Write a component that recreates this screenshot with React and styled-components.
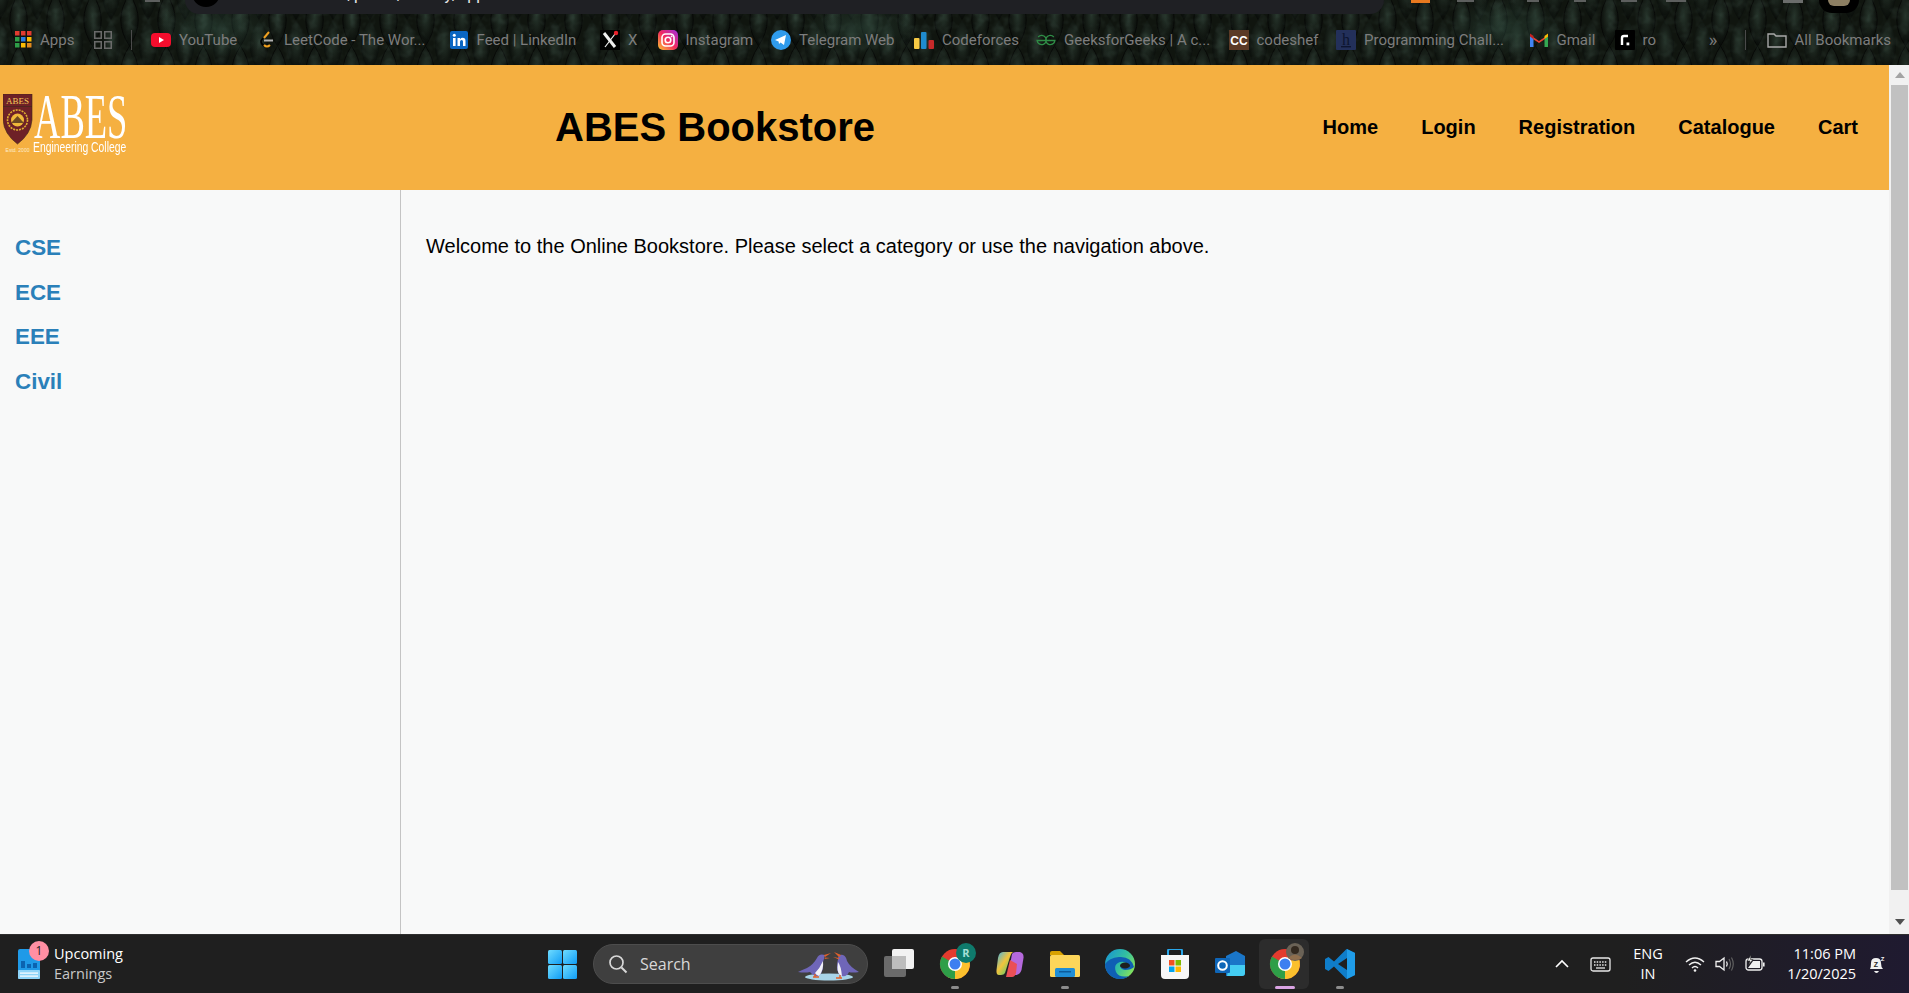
import React from 'react';
import styled, { createGlobalStyle } from 'styled-components';

const GlobalStyle = createGlobalStyle`
    html, body {
        margin: 0;
        padding: 0;
        height: 100%;
        overflow: hidden;
        font-family: "Liberation Sans", Arial, sans-serif;
    }
`;

const Screen = styled.div`
    height: 993px;
    display: flex;
    flex-direction: column;
    background-color: #f8f9f9;
`;

/* ---- browser chrome ---- */
const Chrome = styled.div`
    height: 65px;
    flex: none;
    position: relative;
    overflow: hidden;
    background-color: #10150f;
`;
const ChromeTexture = styled.svg`
    position: absolute;
    inset: 0;
    width: 100%;
    height: 100%;
`;
const TopStrip = styled.div`
    position: relative;
    height: 14px;
    padding-left: 145px;
    display: flex;
    align-items: flex-start;
`;
const AddressBar = styled.div`
    width: 1199px;
    height: 14px;
    flex: none;
    margin-left: 25px;
    background-color: #1f2024;
    border-radius: 0 0 14px 14px;
    overflow: hidden;
    display: flex;
    padding-left: 7px;
    box-sizing: border-box;
`;
const SiteBadge = styled.div`
    width: 28px;
    height: 28px;
    border-radius: 50%;
    background-color: #000;
    margin-top: -21px;
    flex: none;
`;
const UrlText = styled.div`
    color: #e8e8e8;
    font: 16px "Roboto", sans-serif;
    line-height: 16px;
    margin-top: -13px;
    margin-left: 21px;
    white-space: nowrap;
`;
const ToolStub = styled.div`
    width: ${p => p.$width}px;
    height: ${p => p.$height || 2}px;
    margin-left: ${p => p.$gap}px;
    flex: none;
    background-color: ${p => p.$color || '#5d5f5e'};
`;
const Avatar = styled.div`
    width: 40px;
    height: 13px;
    margin-left: 16px;
    flex: none;
    border-radius: 0 0 20px 20px;
    background-color: #000;
    display: flex;
    justify-content: center;
`;
const AvatarPhoto = styled.div`
    width: 22px;
    height: 6px;
    border-radius: 0 0 11px 11px;
    background-color: #8d7f63;
`;
const BookmarkBar = styled.div`
    position: relative;
    height: 51px;
    display: flex;
    align-items: center;
    padding-bottom: 10px;
    box-sizing: border-box;
    padding-top: 10px;
    color: #7d7d7d;
    font: 15px "Roboto", sans-serif;
`;
const Bookmark = styled.div`
    width: ${p => p.$width}px;
    flex: none;
    display: flex;
    align-items: center;
    gap: 8px;
    white-space: nowrap;
`;
const AppsBookmark = styled(Bookmark)`
    padding-left: 15px;
    box-sizing: border-box;
`;
const Separator = styled.div`
    width: 1px;
    height: 20px;
    flex: none;
    background-color: #4a4a4a;
    margin: ${p => p.$margin};
`;
const IconBox = styled.svg`
    width: ${p => p.$size || 20}px;
    height: ${p => p.$height || p.$size || 20}px;
    flex: none;
    overflow: ${p => (p.$spill ? 'visible' : 'hidden')};
`;
const Overflow = styled.div`
    font-size: 19px;
    width: 36px;
    color: #777;
`;

/* ---- page ---- */
const Viewport = styled.div`
    flex: 1;
    min-height: 0;
    display: flex;
`;
const Page = styled.div`
    flex: 1;
    min-width: 0;
    display: flex;
    flex-direction: column;
`;
const Header = styled.header`
    height: 125px;
    flex: none;
    display: flex;
    align-items: center;
    background-color: #f5b041;
    color: #000;
`;
const Logo = styled.div`
    width: 555px;
    flex: none;
    height: 100%;
    display: flex;
    align-items: center;
    padding-left: 3px;
    box-sizing: border-box;
    gap: 2px;
`;
const Shield = styled(IconBox)`
    margin-top: -5px;
`;
const LogoWords = styled.div`
    color: #fff;
    display: flex;
    flex-direction: column;
    width: 96px;
    margin-top: -7px;
`;
const LogoName = styled.div`
    font-family: "Liberation Serif", serif;
    font-size: 63px;
    line-height: 46px;
    margin-left: -1px;
    transform: scaleX(0.58);
    transform-origin: left center;
    white-space: nowrap;
`;
const LogoTag = styled.div`
    font-size: 15px;
    line-height: 14px;
    margin-left: -2px;
    transform: scaleX(0.69);
    transform-origin: left center;
    white-space: nowrap;
`;
const Title = styled.h1`
    margin: 0;
    font-size: 40px;
    font-weight: bold;
    flex: 1;
`;
const Nav = styled.nav`
    display: flex;
    gap: 43px;
    padding-right: 31px;
`;
const NavLink = styled.a`
    font-size: 20px;
    font-weight: bold;
    color: #000;
`;
const Body = styled.div`
    flex: 1;
    display: flex;
    min-height: 0;
`;
const Sidebar = styled.aside`
    width: 401px;
    flex: none;
    box-sizing: border-box;
    border-right: 1px solid #c4c4c4;
    padding: 45px 15px 0;
    display: flex;
    flex-direction: column;
    gap: 18.7px;
`;
const SideLink = styled.a`
    font-size: 22.4px;
    line-height: 26px;
    font-weight: bold;
    color: #2a80b9;
`;
const Main = styled.main`
    flex: 1;
    padding: 43px 25px 0;
    font-size: 20px;
    line-height: 26px;
    color: #000;
`;
const Scrollbar = styled.div`
    width: 20px;
    flex: none;
    background-color: #f1f1f1;
    display: flex;
    flex-direction: column;
    align-items: center;
    padding-left: 1px;
    box-sizing: border-box;
`;
const ArrowUp = styled.div`
    width: 0;
    height: 0;
    margin: 7px 0;
    border-left: 5px solid transparent;
    border-right: 5px solid transparent;
    border-bottom: 6px solid #a3a3a3;
`;
const ArrowDown = styled(ArrowUp)`
    margin: 5px 0 9px;
    border-bottom: none;
    border-top: 6px solid #505050;
`;
const Thumb = styled.div`
    flex: 1;
    width: 17px;
    margin: 0 0 24px;
    background-color: #c1c1c1;
`;

/* ---- windows taskbar ---- */
const Taskbar = styled.footer`
    height: 59px;
    flex: none;
    display: flex;
    align-items: center;
    color: #fff;
    font: 14px "Open Sans", sans-serif;
    background: linear-gradient(90deg, #1f1f1f 0%, #1f1f1f 85%, #1f1a30 100%);
    border-top: 1px solid #2e2e2e;
    box-sizing: border-box;
`;
const Widget = styled.div`
    width: 548px;
    flex: none;
    display: flex;
    align-items: center;
    gap: 12px;
    padding-left: 18px;
    box-sizing: border-box;
    position: relative;
`;
const WidgetBadge = styled.div`
    position: absolute;
    left: 29px;
    top: -3px;
    width: 20px;
    height: 20px;
    border-radius: 50%;
    background-color: #ff8fa3;
    color: #222;
    font-size: 12px;
    line-height: 20px;
    text-align: center;
`;
const WidgetText = styled.div`
    line-height: 20px;
    font-size: 14.5px;
`;
const WidgetSub = styled.div`
    color: #c8c8c8;
`;
const SearchPill = styled.div`
    width: 275px;
    height: 40px;
    margin-left: 16px;
    flex: none;
    box-sizing: border-box;
    background-color: #3f3f3f;
    border: 1px solid #4d4d4d;
    border-radius: 20px;
    display: flex;
    align-items: center;
    padding-left: 14px;
    gap: 12px;
    color: #d8d8d8;
    font-size: 16px;
    position: relative;
`;
const Penguins = styled.svg`
    position: absolute;
    right: 5px;
    top: 7px;
    width: 64px;
    height: 32px;
`;
const TaskView = styled(IconBox)`
    margin-left: 16px;
`;
const Apps = styled.div`
    display: flex;
    align-items: center;
    margin-left: 13px;
`;
const AppTile = styled.div`
    width: 55px;
    height: 50px;
    flex: none;
    position: relative;
    display: flex;
    align-items: center;
    justify-content: center;
    &::before {
        content: '';
        display: ${p => (p.$active ? 'block' : 'none')};
        position: absolute;
        left: 2px;
        top: 0;
        width: 50px;
        height: 50px;
        border-radius: 6px;
        background-color: #2c2c2c;
    }
    & > svg {
        position: relative;
    }
    &::after {
        content: '';
        display: ${p => (p.$dot ? 'block' : 'none')};
        position: absolute;
        bottom: 0;
        left: 50%;
        transform: translateX(-50%);
        width: ${p => (p.$active ? 20 : 8)}px;
        height: 3px;
        border-radius: 2px;
        background-color: ${p => (p.$active ? '#d9a3e3' : '#8c8c8c')};
    }
`;
const Tray = styled.div`
    margin-left: auto;
    display: flex;
    align-items: center;
    padding-right: 24px;
`;
const TrayIcon = styled.div`
    display: flex;
    margin-left: ${p => p.$gap}px;
`;
const Lang = styled.div`
    margin-left: 19px;
    width: 36px;
    text-align: center;
    font-size: 14.5px;
    line-height: 20px;
`;
const Clock = styled.div`
    margin-left: 1px;
    width: 90px;
    text-align: right;
    font-size: 14.5px;
    line-height: 20px;
`;

const appIcons = [
    { dot: true, icon: (
        <IconBox $size={30} $spill viewBox="0 0 30 30">
            <circle cx="15" cy="15" r="15" fill="#e33b2e" />
            <path d="M15 15 L28 7.5 A15 15 0 0 1 7.5 28 Z" fill="#fbc02d" />
            <path d="M15 15 L15 30 A15 15 0 0 1 2 7.5 Z" fill="#2e9e48" />
            <circle cx="15" cy="15" r="7" fill="#fff" />
            <circle cx="15" cy="15" r="5.5" fill="#3d7ff0" />
            <circle cx="26" cy="4" r="10" fill="#0f7a6c" />
            <text x="26" y="8" fontSize="11" fontWeight="bold" fill="#a6e0d6" textAnchor="middle" fontFamily="Open Sans">R</text>
        </IconBox>
    ) },
    { icon: (
        <IconBox $size={30} viewBox="0 0 30 30">
            <defs>
                <linearGradient id="cop" x1="0" y1="0" x2="1" y2="1">
                    <stop offset="0" stopColor="#3fb6e8" />
                    <stop offset="0.45" stopColor="#f2c33c" />
                    <stop offset="0.75" stopColor="#7fc860" />
                    <stop offset="1" stopColor="#3fb6e8" />
                </linearGradient>
            </defs>
            <path d="M17 5 Q18 3 21 3 H25 Q29 4 28.5 9 L26.5 21 Q25 26 20 26 H13 Z" fill="#b569dc" />
            <path d="M8 3 H18 Q16 4 15 8 L10 24 Q9 26 6 26 H4 Q1 26 1.5 21 L3 9 Q4 3 8 3 Z" fill="url(#cop)" />
            <path d="M15 11 L11 28 H17 Q20 28 21 24 L22 15 Z" fill="#ea4f56" />
        </IconBox>
    ) },
    { dot: true, icon: (
        <IconBox $size={30} viewBox="0 0 30 30">
            <path d="M0 4 Q0 2 2 2 H10 L14 6 H0 Z" fill="#d9a200" />
            <rect x="0" y="6" width="30" height="22" rx="1.5" fill="#fdd65a" />
            <rect x="5" y="19" width="20" height="9" rx="1.5" fill="#1f8ed6" />
            <rect x="9" y="22" width="12" height="1.5" fill="#0c5c9c" />
        </IconBox>
    ) },
    { icon: (
        <IconBox $size={30} viewBox="0 0 30 30">
            <defs>
                <linearGradient id="edg" x1="0" y1="0" x2="1" y2="0.6">
                    <stop offset="0" stopColor="#1590d8" />
                    <stop offset="0.6" stopColor="#33c0a0" />
                    <stop offset="1" stopColor="#80e060" />
                </linearGradient>
            </defs>
            <circle cx="15" cy="15" r="15" fill="url(#edg)" />
            <path d="M0 15 A15 15 0 0 0 24 27 Q14 29 11 23 Q8 15 15 13 Q21 12 22 16 H16 Q14 20 20 21 Q26 21 29 18 Q26 7 14 8 Q4 9 0 15 Z" fill="#0f5fb4" />
            <ellipse cx="20" cy="16.5" rx="5" ry="3" fill="#1f1f1f" />
        </IconBox>
    ) },
    { icon: (
        <IconBox $size={30} viewBox="0 0 30 30">
            <path d="M8 6 V2 Q8 0 10 0 H20 Q22 0 22 2 V6" fill="none" stroke="#29a7ea" strokeWidth="2" />
            <path d="M1 6 H29 V26 Q29 30 25 30 H5 Q1 30 1 26 Z" fill="#f7f7f7" />
            <rect x="9" y="11" width="5.5" height="5.5" fill="#f25022" />
            <rect x="15.5" y="11" width="5.5" height="5.5" fill="#7fba00" />
            <rect x="9" y="17.5" width="5.5" height="5.5" fill="#00a4ef" />
            <rect x="15.5" y="17.5" width="5.5" height="5.5" fill="#ffb900" />
        </IconBox>
    ) },
    { icon: (
        <IconBox $size={30} viewBox="0 0 30 30">
            <path d="M11 7 L21 2 L30 7 V24 Q30 27 27 27 H11 Z" fill="#1a76c8" />
            <path d="M14 16 H30 V24 Q30 27 27 27 H12 Z" fill="#44cdf2" />
            <rect x="0" y="9" width="15" height="15" rx="1" fill="#0f66b8" />
            <circle cx="7.5" cy="16.5" r="4.3" fill="none" stroke="#fff" strokeWidth="2" />
        </IconBox>
    ) },
    { dot: true, active: true, icon: (
        <IconBox $size={30} $spill viewBox="0 0 30 30">
            <circle cx="15" cy="15" r="15" fill="#e33b2e" />
            <path d="M15 15 L28 7.5 A15 15 0 0 1 7.5 28 Z" fill="#fbc02d" />
            <path d="M15 15 L15 30 A15 15 0 0 1 2 7.5 Z" fill="#2e9e48" />
            <circle cx="15" cy="15" r="7" fill="#fff" />
            <circle cx="15" cy="15" r="5.5" fill="#3d7ff0" />
            <circle cx="25" cy="3" r="9" fill="#6a6256" />
            <circle cx="25" cy="1" r="4" fill="#33291f" />
            <path d="M18 9 Q25 2 32 9 Q25 13 18 9 Z" fill="#8f6e4d" />
        </IconBox>
    ) },
    { dot: true, icon: (
        <IconBox $size={30} viewBox="0 0 30 30">
            <path fillRule="evenodd" d="M21.5 0 L9 12.5 L3.5 8 L0 10 V20 L3.5 22 L9 17.5 L21.5 30 L30 26 V4 Z M22 9 L13 15 L22 21 Z" fill="#0f7dc9" />
            <path d="M22 0 L30 4 V26 L22 30 Z" fill="#1f9ce8" />
        </IconBox>
    ) },
];

const WIDTHS = [105, 192.5, 151.5, 57.5, 113.5, 143, 122, 192.5, 107.5, 192.5, 86, 94];

const STUBS = [
    { gap: 27, width: 19, height: 3, color: '#e8791f' },
    { gap: 27, width: 17 },
    { gap: 53, width: 12 },
    { gap: 35, width: 12 },
    { gap: 35, width: 16 },
    { gap: 29, width: 20 },
    { gap: 97, width: 20, color: '#6b6d6c', height: 3 },
];

const bookmarks = [
    { label: 'YouTube', icon: (
        <IconBox viewBox="0 0 20 20"><rect y="3" width="20" height="14" rx="4" fill="#f50d2d" /><path d="M8 7 L13 10 L8 13 Z" fill="#fff" /></IconBox>
    ) },
    { label: 'LeetCode - The Wor...', icon: (
        <IconBox viewBox="0 0 20 20">
            <path d="M13 2 L8 8" fill="none" stroke="#f0a020" strokeWidth="2" />
            <path d="M7 8 L5 11 Q5 14 8 16" fill="none" stroke="#000" strokeWidth="1.6" />
            <path d="M8 15 Q11 18 14 15" fill="none" stroke="#f0a020" strokeWidth="2" />
            <path d="M8 10.5 H17" stroke="#b0b0b0" strokeWidth="2" />
        </IconBox>
    ) },
    { label: 'Feed | LinkedIn', icon: (
        <IconBox viewBox="0 0 20 20">
            <rect x="1" y="1" width="18" height="18" rx="2" fill="#0a66c2" />
            <rect x="4" y="8" width="2.6" height="8" fill="#fff" />
            <circle cx="5.3" cy="5.3" r="1.5" fill="#fff" />
            <path d="M8.5 8 H11 V9.2 Q12 7.8 13.6 7.8 Q16.5 7.8 16.5 11 V16 H14 V11.5 Q14 10 12.7 10 Q11 10 11 11.8 V16 H8.5 Z" fill="#fff" />
        </IconBox>
    ) },
    { label: 'X', icon: (
        <IconBox viewBox="0 0 20 20">
            <rect width="20" height="20" fill="#000" />
            <path d="M4 3 L15 17" stroke="#eee" strokeWidth="3" />
            <path d="M15 4 L5 17" stroke="#eee" strokeWidth="1.2" />
            <circle cx="16" cy="3" r="2.2" fill="#e8202a" />
        </IconBox>
    ) },
    { label: 'Instagram', icon: (
        <IconBox viewBox="0 0 20 20">
            <defs>
                <linearGradient id="ig" x1="0" y1="1" x2="1" y2="0">
                    <stop offset="0" stopColor="#fdc830" />
                    <stop offset="0.5" stopColor="#f2295f" />
                    <stop offset="1" stopColor="#a02ee0" />
                </linearGradient>
            </defs>
            <rect width="20" height="20" rx="5" fill="url(#ig)" />
            <rect x="4" y="4" width="12" height="12" rx="3.5" fill="none" stroke="#fff" strokeWidth="1.6" />
            <circle cx="10" cy="10" r="2.8" fill="none" stroke="#fff" strokeWidth="1.6" />
            <circle cx="13.6" cy="6.4" r="0.9" fill="#fff" />
        </IconBox>
    ) },
    { label: 'Telegram Web', icon: (
        <IconBox viewBox="0 0 20 20"><circle cx="10" cy="10" r="10" fill="#2f9bec" /><path d="M4 10 L15 5 L13 15 L9.5 12.5 L8 14 L7.6 11.5 Z" fill="#fff" /></IconBox>
    ) },
    { label: 'Codeforces', icon: (
        <IconBox viewBox="0 0 20 20">
            <rect x="0" y="8" width="5.5" height="11" rx="1" fill="#f6c944" />
            <rect x="7" y="2" width="5.5" height="17" rx="1" fill="#1f8bcf" />
            <rect x="14.5" y="10" width="5.5" height="9" rx="1" fill="#c62a2a" />
        </IconBox>
    ) },
    { label: 'GeeksforGeeks | A c...', icon: (
        <IconBox viewBox="0 0 20 20">
            <path d="M17.8 7 A4.6 4.6 0 1 0 18.9 10.5 H1.1 A4.6 4.6 0 1 0 2.2 7" fill="none" stroke="#2f8d46" strokeWidth="1.4" />
        </IconBox>
    ) },
    { label: 'codeshef', icon: (
        <IconBox viewBox="0 0 20 20">
            <rect width="20" height="20" fill="#5b3a26" />
            <text x="10" y="14.5" fontSize="12" fontWeight="bold" fill="#fff" textAnchor="middle" fontFamily="Liberation Sans">CC</text>
        </IconBox>
    ) },
    { label: 'Programming Chall...', icon: (
        <IconBox viewBox="0 0 20 20">
            <rect width="20" height="20" rx="1" fill="#23305a" />
            <text x="10" y="15" fontSize="16" fill="#0d1530" textAnchor="middle" fontFamily="Liberation Serif">h</text>
            <rect x="5" y="16" width="10" height="1.4" fill="#0d1530" />
        </IconBox>
    ) },
    { label: 'Gmail', icon: (
        <IconBox viewBox="0 0 20 20">
            <path d="M1 5 L10 11 L19 5 V7 L10 13 L1 7 Z" fill="#ea4335" />
            <path d="M1 6 V17 H4.5 V9 Z" fill="#4285f4" />
            <path d="M19 6 V17 H15.5 V9 Z" fill="#34a853" />
            <path d="M1 3.5 L4.5 6 V9 L1 6.5 Z" fill="#c5221f" />
            <path d="M19 3.5 L15.5 6 V9 L19 6.5 Z" fill="#fbbc04" />
        </IconBox>
    ) },
    { label: 'ro', icon: (
        <IconBox viewBox="0 0 20 20">
            <rect width="20" height="20" rx="1" fill="#000" />
            <path d="M7 15 V8 Q7 6 9 6 H13" fill="none" stroke="#fff" strokeWidth="2.4" />
            <rect x="11.5" y="12.5" width="2.8" height="2.8" fill="#fff" />
        </IconBox>
    ) },
];

const App = () => {
    return (
        <Screen>
            <GlobalStyle />
            <Chrome>
                <ChromeTexture aria-hidden="true">
                    <defs>
                        <radialGradient id="scale" cx="50%" cy="42%" r="58%">
                            <stop offset="0" stopColor="#26342b" />
                            <stop offset="0.55" stopColor="#151c16" />
                            <stop offset="1" stopColor="#070a07" />
                        </radialGradient>
                        <pattern id="diamonds" width="37" height="52" patternUnits="userSpaceOnUse" patternTransform="translate(0 -6)">
                            <path d="M0 -26 Q18 0 0 26 Q-18 0 0 -26 Z" fill="url(#scale)" />
                            <path d="M37 -26 Q55 0 37 26 Q19 0 37 -26 Z" fill="url(#scale)" />
                            <path d="M0 26 Q18 52 0 78 Q-18 52 0 26 Z" fill="url(#scale)" />
                            <path d="M37 26 Q55 52 37 78 Q19 52 37 26 Z" fill="url(#scale)" />
                            <path d="M18.5 0 Q36 26 18.5 52 Q1 26 18.5 0 Z" fill="url(#scale)" stroke="#060806" strokeWidth="1" />
                        </pattern>
                        <filter id="grain">
                            <feTurbulence type="fractalNoise" baseFrequency="0.12" numOctaves="2" seed="4" />
                            <feColorMatrix values="0 0 0 0 0.2  0 0 0 0 0.34  0 0 0 0 0.28  0 0 0 1.4 -0.62" />
                        </filter>
                        <radialGradient id="glow" cx="50%" cy="50%" r="50%">
                            <stop offset="0" stopColor="#3a5c4d" stopOpacity="0.4" />
                            <stop offset="1" stopColor="#3a5c4d" stopOpacity="0" />
                        </radialGradient>
                    </defs>
                    <rect width="100%" height="100%" fill="url(#diamonds)" />
                    <rect width="100%" height="100%" filter="url(#grain)" opacity="0.2" />
                    <ellipse cx="215" cy="28" rx="60" ry="30" fill="url(#glow)" />
                    <ellipse cx="860" cy="28" rx="60" ry="30" fill="url(#glow)" />
                    <ellipse cx="1505" cy="28" rx="60" ry="30" fill="url(#glow)" />
                </ChromeTexture>
                <TopStrip>
                    <ToolStub $gap={0} $width={15} />
                    <AddressBar>
                        <SiteBadge />
                        <UrlText>127.0.0.1:5500/public/Library/app</UrlText>
                    </AddressBar>
                    {STUBS.map((s, i) => (
                        <ToolStub key={i} $gap={s.gap} $width={s.width} $height={s.height} $color={s.color} />
                    ))}
                    <Avatar><AvatarPhoto /></Avatar>
                </TopStrip>
                <BookmarkBar>
                    <AppsBookmark $width={94}>
                        <IconBox $size={17} viewBox="0 0 17 17">
                            {[0, 6, 12].map(y => [0, 6, 12].map(x => (
                                <rect key={`${x}-${y}`} x={x} y={y} width="4.5" height="4.5" fill={y === 0 ? '#e23b30' : y === 6 ? (x === 6 ? '#2a7de1' : x === 0 ? '#2e9e48' : '#fbbc04') : (x === 0 ? '#2e9e48' : x === 6 ? '#fbbc04' : '#e08a1e')} />
                            )))}
                        </IconBox>
                        Apps
                    </AppsBookmark>
                    <IconBox $size={18} viewBox="0 0 18 18">
                        {[0, 10].map(y => [0, 10].map(x => (
                            <rect key={`${x}-${y}`} x={x + 0.75} y={y + 0.75} width="6.5" height="6.5" fill="none" stroke="#6a6a6a" strokeWidth="1.5" />
                        )))}
                    </IconBox>
                    <Separator $margin="0 19px 0 19px" />
                    {bookmarks.map((b, i) => (
                        <Bookmark key={b.label} $width={WIDTHS[i]}>
                            {b.icon}
                            {b.label}
                        </Bookmark>
                    ))}
                    <Overflow>»</Overflow>
                    <Separator $margin="0 21px 0 0" />
                    <Bookmark $width={130}>
                        <IconBox viewBox="0 0 20 20">
                            <path d="M1 4 H7 L9 6 H19 V17 H1 Z" fill="none" stroke="#a8a8a8" strokeWidth="1.4" />
                        </IconBox>
                        All Bookmarks
                    </Bookmark>
                </BookmarkBar>
            </Chrome>

            <Viewport>
                <Page>
                    <Header>
                        <Logo>
                            <Shield $size={30} $height={62} viewBox="0 0 30 62">
                                <path d="M0 0 H29 V26 Q28 40 14.5 50 Q1 40 0 26 Z" fill="#6e2127" stroke="#3c2a1a" strokeWidth="0.6" />
                                <text x="14.5" y="10" fontSize="9" fill="#f5c95a" textAnchor="middle" fontFamily="Liberation Serif">ABES</text>
                                <path d="M0 12.5 H29" stroke="#3c2a1a" strokeWidth="0.6" />
                                <circle cx="14.5" cy="26" r="10" fill="none" stroke="#e0b030" strokeWidth="1.6" strokeDasharray="2 1" />
                                <circle cx="14.5" cy="26" r="6.5" fill="#f0b93a" />
                                <path d="M8 29 L14.5 22 L21 29 Z" fill="#6e4a22" />
                                <text x="14.5" y="58" fontSize="5" fill="#fdeccb" textAnchor="middle" fontFamily="Liberation Sans">Estd. 2000</text>
                            </Shield>
                            <LogoWords>
                                <LogoName>ABES</LogoName>
                                <LogoTag>Engineering College</LogoTag>
                            </LogoWords>
                        </Logo>
                        <Title>ABES Bookstore</Title>
                        <Nav>
                            <NavLink>Home</NavLink>
                            <NavLink>Login</NavLink>
                            <NavLink>Registration</NavLink>
                            <NavLink>Catalogue</NavLink>
                            <NavLink>Cart</NavLink>
                        </Nav>
                    </Header>
                    <Body>
                        <Sidebar>
                            <SideLink>CSE</SideLink>
                            <SideLink>ECE</SideLink>
                            <SideLink>EEE</SideLink>
                            <SideLink>Civil</SideLink>
                        </Sidebar>
                        <Main>Welcome to the Online Bookstore. Please select a category or use the navigation above.</Main>
                    </Body>
                </Page>
                <Scrollbar>
                    <ArrowUp />
                    <Thumb />
                    <ArrowDown />
                </Scrollbar>
            </Viewport>

            <Taskbar>
                <Widget>
                    <IconBox $size={24} $height={30} viewBox="0 0 24 30">
                        <rect width="22" height="30" rx="2" fill="#1f9ae8" />
                        <rect y="21" width="22" height="9" rx="1" fill="#8fd4f8" />
                        <rect x="3" y="12" width="4" height="7" fill="#0b63b0" />
                        <rect x="9" y="15" width="4" height="4" fill="#0b63b0" />
                        <rect x="15" y="14" width="4" height="5" fill="#0b63b0" />
                        <rect x="2" y="23.5" width="18" height="1.2" fill="#fff" />
                        <rect x="2" y="26.5" width="18" height="1.2" fill="#fff" />
                    </IconBox>
                    <WidgetBadge>1</WidgetBadge>
                    <WidgetText>
                        Upcoming
                        <WidgetSub>Earnings</WidgetSub>
                    </WidgetText>
                </Widget>
                <IconBox $size={29} viewBox="0 0 29 29">
                    <defs>
                        <linearGradient id="win" x1="0" y1="0" x2="1" y2="1">
                            <stop offset="0" stopColor="#6fdcff" />
                            <stop offset="1" stopColor="#0f9cf5" />
                        </linearGradient>
                    </defs>
                    <rect x="0" y="0" width="14" height="14" rx="1.5" fill="url(#win)" />
                    <rect x="15" y="0" width="14" height="14" rx="1.5" fill="url(#win)" />
                    <rect x="0" y="15" width="14" height="14" rx="1.5" fill="url(#win)" />
                    <rect x="15" y="15" width="14" height="14" rx="1.5" fill="url(#win)" />
                </IconBox>
                <SearchPill>
                    <IconBox $size={20} viewBox="0 0 20 20">
                        <circle cx="8.5" cy="8.5" r="6.5" fill="none" stroke="#d8d8d8" strokeWidth="1.7" />
                        <path d="M13.5 13.5 L18.5 18.5" stroke="#d8d8d8" strokeWidth="1.9" />
                    </IconBox>
                    Search
                    <Penguins viewBox="0 0 64 32">
                        <ellipse cx="31" cy="25" rx="24" ry="3.5" fill="#a8d4e8" />
                        <path d="M27 3 Q21 1 19 6 Q15 13 9 16 Q4 18 0 20 Q7 21 12 20 Q16 25 21 24 Q26 19 25 10 Q26 7 27 3 Z" fill="#6f66b8" />
                        <path d="M25 9 Q26 18 21 24 Q18 23 17 21 Q22 16 25 9 Z" fill="#f2f2f8" />
                        <path d="M26 3 L33 1 L27 5 Z M27 5.5 L32 6 L26.5 7 Z" fill="#e0602a" />
                        <path d="M15 25 H21 M17 22 V25" stroke="#e0602a" strokeWidth="1.4" />
                        <path d="M40 7 Q40 2 45 3 Q48 4 49 9 Q52 15 61 20 Q54 21 51 20 Q49 25 44 24 Q39 22 39 15 Q39 11 40 7 Z" fill="#6f66b8" />
                        <path d="M40 10 Q43 14 44 24 Q39 22 39.5 15 Z" fill="#f2f2f8" />
                        <path d="M41 5 L36 0 L43 3 Z M41 6 L35 5 L41 7.5 Z" fill="#e0602a" />
                        <path d="M38 26 H44 M42 23 V26" stroke="#e0602a" strokeWidth="1.4" />
                    </Penguins>
                </SearchPill>
                <TaskView $size={30} viewBox="0 0 30 30">
                    <rect x="0" y="7" width="22" height="21" rx="2" fill="#6b6b6b" />
                    <rect x="8" y="0" width="22" height="20" rx="2" fill="#f2f2f2" />
                    <rect x="8" y="7" width="14" height="13" fill="#bdbdbd" />
                </TaskView>
                <Apps>
                    {appIcons.map((a, i) => (
                        <AppTile key={i} $dot={a.dot} $active={a.active}>{a.icon}</AppTile>
                    ))}
                </Apps>
                <Tray>
                    <IconBox $size={16} viewBox="0 0 16 16">
                        <path d="M2 11 L8 5 L14 11" fill="none" stroke="#fff" strokeWidth="1.6" />
                    </IconBox>
                    <TrayIcon $gap={20}>
                        <IconBox $size={21} viewBox="0 0 21 21">
                            <rect x="1" y="4" width="19" height="13" rx="2" fill="none" stroke="#e8e8e8" strokeWidth="1.3" />
                            <path d="M4 8 H17 M4 11 H17" stroke="#e8e8e8" strokeWidth="1.4" strokeDasharray="1.5 1.2" />
                            <path d="M6 14 H15" stroke="#e8e8e8" strokeWidth="1.3" />
                        </IconBox>
                    </TrayIcon>
                    <Lang>ENG<br />IN</Lang>
                    <TrayIcon $gap={19}>
                        <IconBox $size={20} viewBox="0 0 20 20">
                            <path d="M1 8 Q10 0 19 8 M4 11 Q10 5.5 16 11 M7 14 Q10 11 13 14" fill="none" stroke="#f0f0f0" strokeWidth="1.4" />
                            <circle cx="10" cy="16.5" r="1.3" fill="#f0f0f0" />
                        </IconBox>
                    </TrayIcon>
                    <TrayIcon $gap={10}>
                        <IconBox $size={20} viewBox="0 0 20 20">
                            <path d="M1 7.5 H4.5 L9 4 V16 L4.5 12.5 H1 Z" fill="none" stroke="#f0f0f0" strokeWidth="1.3" />
                            <path d="M11.5 7.5 Q13 10 11.5 12.5" fill="none" stroke="#f0f0f0" strokeWidth="1.3" />
                            <path d="M14 5 Q17 10 14 15 M16.5 3.5 Q20 10 16.5 16.5" fill="none" stroke="#666" strokeWidth="1.1" />
                        </IconBox>
                    </TrayIcon>
                    <TrayIcon $gap={10}>
                        <IconBox $size={20} viewBox="0 0 20 20">
                            <rect x="1" y="5" width="16" height="11" rx="2.5" fill="none" stroke="#f0f0f0" strokeWidth="1.3" />
                            <path d="M3 14 L8 7 H15 V14 Z" fill="#f0f0f0" />
                            <rect x="18" y="8.5" width="1.6" height="4" fill="#f0f0f0" />
                            <path d="M6 1 L2 7 H5 L3.5 11 L8 5.5 H5.5 Z" fill="#f0f0f0" stroke="#1f1f1f" strokeWidth="0.6" />
                        </IconBox>
                    </TrayIcon>
                    <Clock>11:06 PM<br />1/20/2025</Clock>
                    <TrayIcon $gap={12}>
                        <IconBox $size={17} $height={19} viewBox="0 0 17 19">
                            <path d="M2 14 Q3 12 3 8 Q3 3 8 3 Q13 3 13 8 Q13 12 15 14 Z" fill="#f2f2f2" />
                            <path d="M6 16 H11 Q10 18 8.5 18 Q7 18 6 16 Z" fill="#f2f2f2" />
                            <text x="8" y="11.5" fontSize="7" fontWeight="bold" fill="#1f1f1f" textAnchor="middle" fontFamily="Liberation Sans">Z</text>
                            <text x="14.5" y="6" fontSize="6" fontWeight="bold" fill="#f2f2f2" textAnchor="middle" fontFamily="Liberation Sans">Z</text>
                        </IconBox>
                    </TrayIcon>
                </Tray>
            </Taskbar>
        </Screen>
    );
};

export default App;
